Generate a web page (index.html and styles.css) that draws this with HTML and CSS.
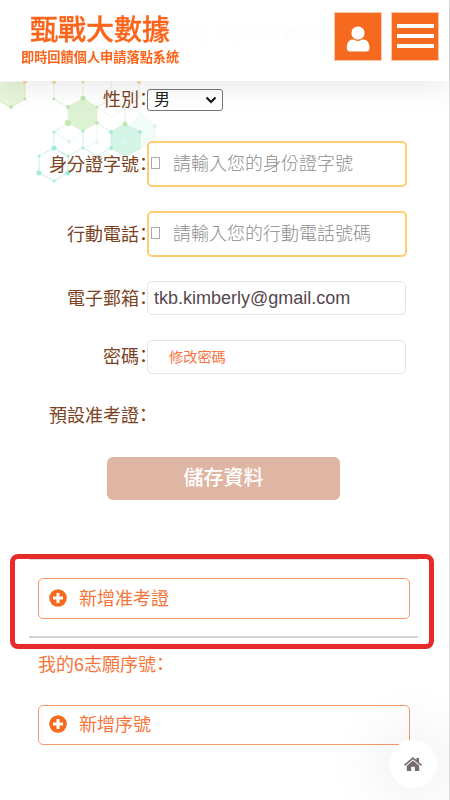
FILE: index.html
```html
<!DOCTYPE html>
<html lang="zh-Hant">
<head>
  <meta charset="UTF-8">
  <meta name="viewport" content="width=device-width, initial-scale=1.0">
  <title>甄戰大數據</title>
  <link rel="stylesheet" href="styles.css">
</head>
<body>
  <header class="header">
    <div class="logo">
      <div class="logo-title">甄戰大數據</div>
      <div class="logo-sub">即時回饋個人申請落點系統</div>
    </div>
    <nav class="tools">
      <a class="tool" href="#">
        <svg width="44" height="44" viewBox="0 0 44 44" fill="#fff">
          <circle cx="22" cy="20" r="6.600"/>
          <path d="M10.800 35c0-6 2.700-8.500 6.200-8.500 1.700 0 2.700 1.600 5 1.600s3.300-1.600 5-1.600c3.500 0 6.500 2.500 6.500 8.500 0 2.400-1.200 3.600-3.500 3.600H14.300c-2.300 0-3.500-1.200-3.500-3.600z"/>
        </svg>
      </a>
      <a class="tool menu" href="#"><span></span><span></span><span></span></a>
    </nav>
  </header>

  <svg class="hexagons" width="170" height="190" viewBox="0 0 170 190" fill="none">
    <path d="M-4 82H25V99L11 107L-4 100z" fill="#e9f5d9"/>
    <path d="M83 98L97 107V123L83 131L68 123V107z" fill="#ddf2d3"/>
    <path d="M125 124L140 132V149L125 156L111 148V132z" fill="#d3f4e6"/>
    <path d="M141 113L156 126V142L140 149V132L129 124z" fill="#f1fbf8"/>
    <path d="M54 82V99L68 107M83 82V98L68 107V123L83 131L97 123V107L83 98M111 82V99L97 107M139 82V99L125 107L111 99M125 107V124" stroke="#eaf1d6"/>
    <path d="M-4 100L11 107L25 99V82" stroke="#e0ebc8"/>
    <path d="M68 123L54 132V148L68 156L83 148V131M97 123L111 132V148L125 156L140 149V132L125 124L111 132" stroke="#cff2de"/>
    <path d="M97 107L111 117L125 107L141 113M97 123V142L83 148M54 132L69 142L83 131" stroke="#eaf8f0"/>
    <path d="M54 148L68 156V173L54 181L39 173V156zM83 148L97 156L111 148" stroke="#c0f1e8"/>
    <g fill="#f7d9a2"><circle cx="25" cy="82" r="2"/><circle cx="54" cy="82" r="2"/><circle cx="83" cy="82" r="1.500"/><circle cx="139" cy="82" r="2"/></g>
    <g fill="#bde8b4"><circle cx="11" cy="107" r="2"/><circle cx="25" cy="99" r="1.500"/><circle cx="54" cy="99" r="1.500"/><circle cx="68" cy="107" r="2"/><circle cx="83" cy="98" r="2.500"/><circle cx="97" cy="107" r="1.500"/><circle cx="68" cy="123" r="3"/><circle cx="97" cy="123" r="2"/><circle cx="125" cy="124" r="2.500"/></g>
    <g fill="#a4eadc"><circle cx="54" cy="132" r="1.500"/><circle cx="83" cy="131" r="1.500"/><circle cx="111" cy="132" r="2"/><circle cx="140" cy="132" r="2"/><circle cx="83" cy="148" r="1.500"/><circle cx="111" cy="148" r="2"/><circle cx="54" cy="148" r="2.500"/><circle cx="68" cy="156" r="1.500"/><circle cx="39" cy="156" r="1.500"/><circle cx="39" cy="173" r="2.500"/><circle cx="68" cy="173" r="2.500"/><circle cx="54" cy="181" r="1.500"/></g>
    <g fill="#ddf6ee"><circle cx="69" cy="142" r="2"/><circle cx="97" cy="142" r="1.500"/><circle cx="125" cy="142" r="2"/><circle cx="155" cy="126" r="2"/></g>
  </svg>

  <main class="content">
    <form class="profile">
      <div class="row row-name">
        <label>姓名<i>：</i></label>
        <div class="field required"><span class="glyph"></span>請輸入您的真實姓名</div>
      </div>
      <div class="row row-gender">
        <label>性別<i>：</i></label>
        <div class="select">男
          <svg width="12" height="8" viewBox="0 0 12 8" fill="none" stroke="#111" stroke-width="2"><path d="M1.500 1.500L6 6L10.500 1.500"/></svg>
        </div>
      </div>
      <div class="row row-id">
        <label>身分證字號<i>：</i></label>
        <div class="field required"><span class="glyph"></span>請輸入您的身份證字號</div>
      </div>
      <div class="row row-phone">
        <label>行動電話<i>：</i></label>
        <div class="field required"><span class="glyph"></span>請輸入您的行動電話號碼</div>
      </div>
      <div class="row row-mail">
        <label>電子郵箱<i>：</i></label>
        <div class="field email">tkb.kimberly@gmail.com</div>
      </div>
      <div class="row row-password">
        <label>密碼<i>：</i></label>
        <div class="field password"><a href="#">修改密碼</a></div>
      </div>
      <div class="row row-ticket">
        <label>預設准考證<i>：</i></label>
      </div>
      <button class="save" type="button">儲存資料</button>
    </form>

    <section class="highlight">
      <div class="ticket">
        <a class="add" href="#">
          <svg width="18" height="18" viewBox="0 0 18 18"><circle cx="9" cy="9" r="8.800" fill="#f56a1f"/><path d="M9 4V14M4 9H14" stroke="#fff" stroke-width="3"/></svg>
          新增准考證
        </a>
      </div>
    </section>

    <section class="serial">
      <h2>我的6志願序號<i>：</i></h2>
      <a class="add" href="#">
        <svg width="18" height="18" viewBox="0 0 18 18"><circle cx="9" cy="9" r="8.800" fill="#f56a1f"/><path d="M9 4V14M4 9H14" stroke="#fff" stroke-width="3"/></svg>
        新增序號
      </a>
    </section>
  </main>

  <a class="home" href="#">
    <svg width="18" height="14" viewBox="0 0 18 14" fill="#746c6e">
      <path d="M9 0L12.500 3V1H15V5.200L18 7.800L17 9L9 2.300L1 9L0 7.800z"/>
      <path d="M9 3.600L15.200 8.800V14H10.800V9.800H7.200V14H2.800V8.800z"/>
    </svg>
  </a>
</body>
</html>
```
FILE: styles.css
```css
* { box-sizing: border-box; }
body {
  margin: 0;
  height: 800px;
  overflow: hidden;
  position: relative;
  border-right: 1px solid #dcdcdc;
  background: #fff;
  font-family: "Liberation Sans", "Noto Sans CJK TC", sans-serif;
  font-size: 18px;
  color: #7b4323;
}
a { color: inherit; text-decoration: none; }
i {
  display: inline-block;
  width: 8px;
  text-align: left;
  text-spacing-trim: space-all;
  font-feature-settings: "halt";
  font-style: normal;
  font-family: "Noto Sans CJK TC", sans-serif;
  white-space: nowrap;
}

.header {
  position: fixed;
  z-index: 5;
  top: 0;
  left: 0;
  width: 449px;
  height: 81px;
  padding: 12px 10px 0 21px;
  display: flex;
  justify-content: space-between;
  background: rgba(255,255,255,0.97);
  box-shadow: 0 4px 30px rgba(0,0,0,0.1);
  color: #fb641b;
}
.logo { white-space: nowrap; }
.logo-title { margin: 4px 0 0 9px; font-size: 28px; line-height: 30px; font-weight: 500; -webkit-text-stroke: 0.3px #fb641b; }
.logo-sub { margin-top: 4px; font-size: 13.200px; line-height: 16px; font-weight: bold; }
.tools { display: flex; gap: 9px; }
.tool { width: 48px; height: 49px; border: 1px solid #fcc9ab; background: #f56a1f; display: flex; justify-content: center; }
.menu { flex-direction: column; justify-content: flex-start; align-items: center; gap: 6px; padding-top: 11px; }
.menu span { width: 37px; height: 4px; background: #fff; }

.hexagons { position: absolute; top: 0; left: 0; }

.content { position: relative; padding-top: 12px; }
.row { display: flex; align-items: center; }
.row label { width: 147px; text-align: right; line-height: 24px; white-space: nowrap; }
.row-name { margin-bottom: 31px; }
.row-gender { height: 22px; margin-bottom: 30px; }
.row-id { margin-bottom: 24px; }
.row-phone { margin-bottom: 24px; }
.row-mail { margin-bottom: 25px; }
.row-password { margin-bottom: 29px; }
.row-ticket { height: 24px; margin-bottom: 30px; }
.row-gender label, .row-password label { padding-bottom: 2px; }

.field {
  width: 259px;
  height: 34px;
  border: 1px solid #e5e5e5;
  border-radius: 5px;
  background: #fff;
  display: flex;
  align-items: center;
  white-space: nowrap;
}
.required { width: 260px; height: 46px; padding: 0 0 5px 2px; border: 2px solid #fdcf72; color: #8e8e8e; font-weight: 300; }
.glyph { width: 9px; height: 12px; margin: 2px 13px 0 0; border: 1px solid #aaa; }
.email { padding-left: 6px; color: #55474f; }
.password { padding: 0 0 2px 21px; font-size: 14.200px; color: #fa7642; }
.select {
  width: 76px;
  height: 22px;
  padding: 0 5px 0 6px;
  border: 1px solid #777;
  border-radius: 3px;
  background: #fff;
  display: flex;
  align-items: center;
  justify-content: space-between;
  font-size: 16px;
  line-height: 18px;
  color: #222;
}
.save {
  display: block;
  width: 233px;
  height: 43px;
  margin-left: 107px;
  padding: 0 0 4px;
  border: 0;
  border-radius: 6px;
  background: #dfb5a3;
  color: #fff;
  font: 500 20px "Noto Sans CJK TC", sans-serif;
}

.highlight { width: 424px; height: 95px; margin: 54px 0 0 10px; padding: 0 11px 0 14px; border: 5px solid #e72b2b; border-radius: 8px; }
.ticket { height: 79px; padding: 18px 8px 0 9px; border-top: 1px solid #ddd; border-bottom: 2px solid #d3d3d3; }
.add {
  width: 372px;
  height: 41px;
  padding: 0 0 4px 10px;
  border: 1px solid #f99b68;
  border-radius: 5px;
  display: flex;
  align-items: center;
  gap: 12px;
  color: #f5763a;
}
.add svg { margin-top: 2px; }
.serial { padding: 2px 0 0 38px; }
.serial h2 { margin: 0 0 28px; font-size: 18px; font-weight: normal; line-height: 24px; color: #f5763a; }
.serial .add { height: 40px; }

.home {
  position: fixed;
  right: 13px;
  bottom: 12px;
  width: 48px;
  height: 48px;
  border-radius: 50%;
  background: #fff;
  box-shadow: 0 0 60px 10px rgba(0,0,0,0.08);
  display: flex;
  align-items: center;
  justify-content: center;
}
```
